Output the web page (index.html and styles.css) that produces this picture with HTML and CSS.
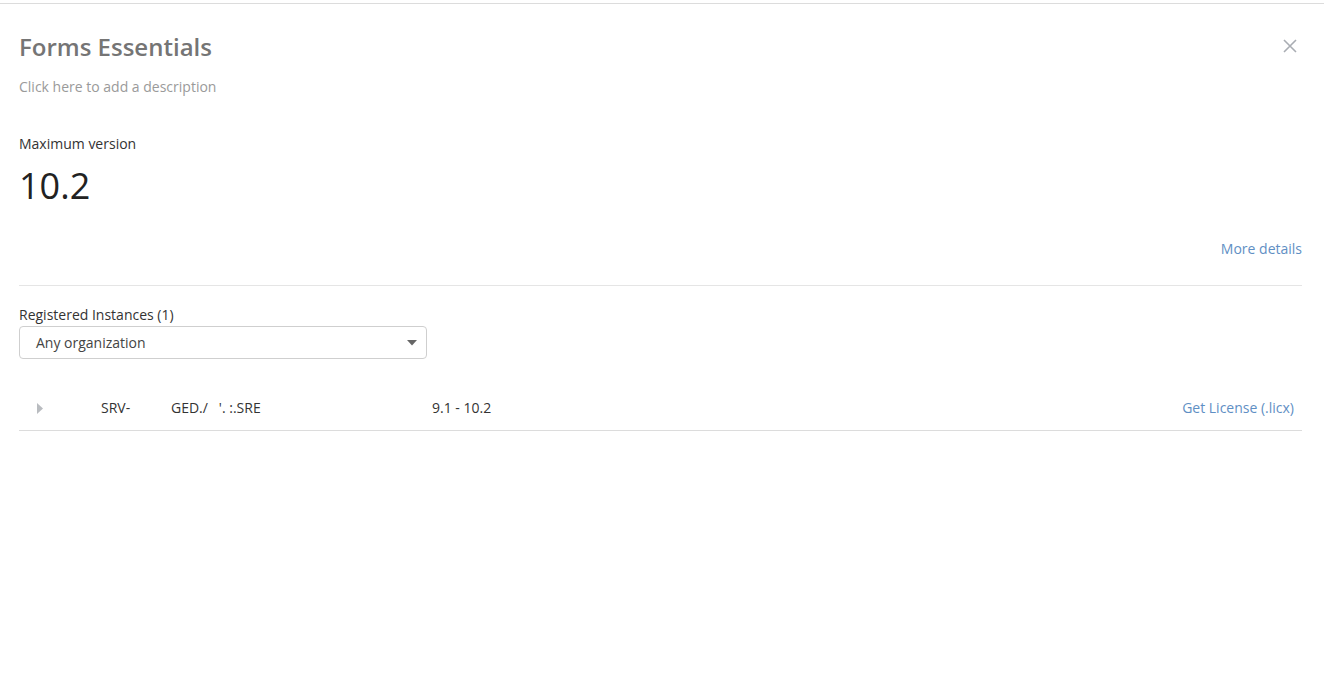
FILE: index.html
```html
<!DOCTYPE html>
<html>
<head>
<meta charset="utf-8">
<link rel="stylesheet" href="styles.css">
</head>
<body>
<div class="topline"></div>
<div class="panel">
  <div class="header">
    <div>
      <h1 class="title">Forms Essentials</h1>
      <div class="desc">Click here to add a description</div>
    </div>
    <svg class="close" width="14" height="14" viewBox="0 0 14 14"><path d="M1 1L13 13M13 1L1 13" stroke="#a9adb3" stroke-width="1.6" fill="none"/></svg>
  </div>
  <div class="label">Maximum version</div>
  <div class="version">10.2</div>
  <div class="more"><a>More details</a></div>
  <div class="sep"></div>
  <div class="label reg">Registered Instances (1)</div>
  <div class="select">
    <span>Any organization</span>
    <svg width="10" height="6" viewBox="0 0 10 6"><path d="M0 0H10L5 5.5Z" fill="#666"/></svg>
  </div>
  <div class="row">
    <svg class="caret" width="6" height="11" viewBox="0 0 6 11"><path d="M0 0L6 5.5L0 11Z" fill="#b9bcc0"/></svg>
    <span class="c1">SRV-</span>
    <span class="c2">GED./&nbsp;&nbsp;&nbsp;'.&nbsp;:.SRE</span>
    <span class="c3">9.1 - 10.2</span>
    <a class="lic">Get License (.licx)</a>
  </div>
</div>
</body>
</html>
```
FILE: styles.css
```css
html, body { margin: 0; padding: 0; background: #fff; }
body { font-family: "Open Sans", "Liberation Sans", sans-serif; color: #333; font-size: 14px; }
.topline { height: 3px; border-bottom: 1px solid #dcdcdc; }
.panel { padding: 0 22px 0 19px; }
.header { display: flex; justify-content: space-between; align-items: flex-start; padding-top: 27px; }
.title { margin: 0; font-size: 24px; font-weight: 600; color: #757575; line-height: 32px; }
.desc { margin-top: 14px; font-size: 14px; color: #9a9a9a; line-height: 20px; }
.close { margin-top: 8px; margin-right: 5px; }
.label { font-size: 14px; color: #333; line-height: 20px; }
.header + .label { margin-top: 37px; }
.version { font-size: 36px; color: #222; line-height: 44px; margin-top: 10px; }
.more { text-align: right; margin-top: 31px; line-height: 20px; }
.more a, .lic { color: #5f8fc4; font-size: 14px; }
.sep { height: 1px; background: #e5e5e5; margin-top: 26px; }
.reg { margin-top: 19px; }
.select { height: 31px; border: 1px solid #cfcfcf; border-radius: 4px; display: flex; align-items: center; justify-content: space-between; padding: 0 9px 0 16px; box-sizing: content-box; width: 381px; margin-top: 1px; }
.select span { color: #444; font-size: 14px; }
.row { display: flex; align-items: center; height: 46px; margin-top: 25px; border-bottom: 1px solid #dcdcdc; }
.caret { margin-left: 18px; margin-top: 2px; }
.c1 { margin-left: 58px; width: 70px; color: #333; }
.c2 { width: 261px; color: #333; }
.c3 { color: #333; flex: 1; }
.lic { margin-right: 8px; }
```
